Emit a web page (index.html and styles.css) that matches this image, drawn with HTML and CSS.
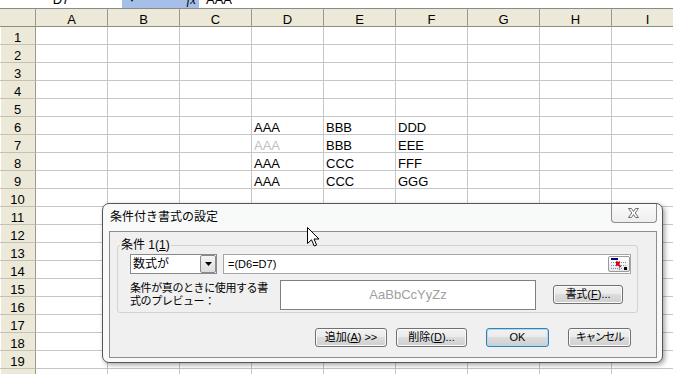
FILE: index.html
```html
<!DOCTYPE html>
<html>
<head>
    <meta charset="utf-8">
    <title>条件付き書式の設定</title>
    <link rel="stylesheet" href="styles.css">
</head>
<body>
    <div class="formula-bar">
        <div class="name-box">D7</div>
        <div class="bar-tools"><span class="name-arrow">▼</span><span class="fx">fx</span></div>
        <div class="formula">AAA</div>
    </div>

    <div class="sheet">
        <div class="corner"></div>
        <div class="col-head">A</div><div class="col-head">B</div><div class="col-head">C</div><div class="col-head">D</div><div class="col-head">E</div><div class="col-head">F</div><div class="col-head">G</div><div class="col-head">H</div><div class="col-head">I</div>

        <div class="row-head">1</div><div></div><div></div><div></div><div></div><div></div><div></div><div></div><div></div><div></div>
        <div class="row-head">2</div><div></div><div></div><div></div><div></div><div></div><div></div><div></div><div></div><div></div>
        <div class="row-head">3</div><div></div><div></div><div></div><div></div><div></div><div></div><div></div><div></div><div></div>
        <div class="row-head">4</div><div></div><div></div><div></div><div></div><div></div><div></div><div></div><div></div><div></div>
        <div class="row-head">5</div><div></div><div></div><div></div><div></div><div></div><div></div><div></div><div></div><div></div>
        <div class="row-head">6</div><div></div><div></div><div></div><div>AAA</div><div>BBB</div><div>DDD</div><div></div><div></div><div></div>
        <div class="row-head">7</div><div></div><div></div><div></div><div class="faded">AAA</div><div>BBB</div><div>EEE</div><div></div><div></div><div></div>
        <div class="row-head">8</div><div></div><div></div><div></div><div>AAA</div><div>CCC</div><div>FFF</div><div></div><div></div><div></div>
        <div class="row-head">9</div><div></div><div></div><div></div><div>AAA</div><div>CCC</div><div>GGG</div><div></div><div></div><div></div>
        <div class="row-head">10</div><div></div><div></div><div></div><div></div><div></div><div></div><div></div><div></div><div></div>
        <div class="row-head">11</div><div></div><div></div><div></div><div></div><div></div><div></div><div></div><div></div><div></div>
        <div class="row-head">12</div><div></div><div></div><div></div><div></div><div></div><div></div><div></div><div></div><div></div>
        <div class="row-head">13</div><div></div><div></div><div></div><div></div><div></div><div></div><div></div><div></div><div></div>
        <div class="row-head">14</div><div></div><div></div><div></div><div></div><div></div><div></div><div></div><div></div><div></div>
        <div class="row-head">15</div><div></div><div></div><div></div><div></div><div></div><div></div><div></div><div></div><div></div>
        <div class="row-head">16</div><div></div><div></div><div></div><div></div><div></div><div></div><div></div><div></div><div></div>
        <div class="row-head">17</div><div></div><div></div><div></div><div></div><div></div><div></div><div></div><div></div><div></div>
        <div class="row-head">18</div><div></div><div></div><div></div><div></div><div></div><div></div><div></div><div></div><div></div>
        <div class="row-head">19</div><div></div><div></div><div></div><div></div><div></div><div></div><div></div><div></div><div></div>
        <div class="row-head">20</div><div></div><div></div><div></div><div></div><div></div><div></div><div></div><div></div><div></div>
    </div>

    <div class="dialog">
        <div class="titlebar">
            <div class="title">条件付き書式の設定</div>
            <button class="close">
                <svg width="12" height="11" viewBox="0 0 12 11"><polygon points="0.5,0.5 3.5,0.5 5.5,3.5 7.5,0.5 10.5,0.5 7.2,5 10.5,9.5 7.5,9.5 5.5,6.5 3.5,9.5 0.5,9.5 3.8,5" fill="#fff" stroke="#6e6e6e"/></svg>
            </button>
        </div>
        <div class="client">
            <fieldset class="condition">
                <legend>条件 1(<u>1</u>)</legend>
                <div class="cond-row">
                    <div class="combo">
                        <span class="combo-text">数式が</span>
                        <span class="combo-btn"><svg width="7" height="4" viewBox="0 0 7 4"><polygon points="0,0 7,0 3.5,4" fill="#000"/></svg></span>
                    </div>
                    <div class="formula-input">
                        <span>=(D6=D7)</span>
                        <span class="collapse">
                            <svg width="20" height="14" viewBox="0 0 20 14">
                                <rect x="2" y="1" width="7" height="2" fill="#00007f"/>
                                <line x1="2" y1="5.5" x2="18" y2="5.5" stroke="#7f8fbf" stroke-dasharray="1 1"/>
                                <line x1="2" y1="8.5" x2="18" y2="8.5" stroke="#7f8fbf" stroke-dasharray="1 1"/>
                                <line x1="2" y1="11.5" x2="14" y2="11.5" stroke="#7f8fbf" stroke-dasharray="1 1"/>
                                <line x1="10.5" y1="4" x2="10.5" y2="13" stroke="#7f8fbf" stroke-dasharray="1 1"/>
                                <path d="M7 4 L7 9.5 L8.6 8 L11 10.6 L12.3 9.3 L9.9 6.8 L11.5 5.3 Z" fill="#e00000"/>
                                <rect x="15" y="10" width="3" height="3" fill="#000"/>
                            </svg>
                        </span>
                    </div>
                </div>
                <div class="preview-row">
                    <div class="preview-label">条件が真のときに使用する書<br>式のプレビュー：</div>
                    <div class="preview">AaBbCcYyZz</div>
                    <button class="btn format-btn">書式(<u>F</u>)...</button>
                </div>
            </fieldset>
            <div class="actions">
                <button class="btn add-btn">追加(<u>A</u>) &gt;&gt;</button>
                <button class="btn delete-btn">削除(<u>D</u>)...</button>
                <button class="btn ok-btn">OK</button>
                <button class="btn cancel-btn">キャンセル</button>
            </div>
        </div>
    </div>

    <svg class="cursor" width="13" height="21" viewBox="0 0 13 21">
        <path d="M0.5 0.5 V16.5 L4.5 12.8 L7.2 19 L9.6 18 L7 12 H12 Z" fill="#fff" stroke="#000"/>
    </svg>
</body>
</html>
```

FILE: styles.css
```css
body {
    margin: 0;
    width: 673px;
    height: 374px;
    overflow: hidden;
    position: relative;
    background-color: #fff;
    font-family: "Liberation Sans", Arial, sans-serif;
}

/* formula bar, only its lower edge shows */
.formula-bar {
    display: flex;
    height: 8px;
    overflow: hidden;
    font-size: 13px;
    line-height: 18px;
}

.formula-bar > div {
    height: 18px;
    margin-top: -9px;
}

.name-box {
    width: 122px;
    text-align: center;
}

.bar-tools {
    width: 77px;
    box-sizing: border-box;
    padding: 0 3px 0 6px;
    display: flex;
    justify-content: space-between;
    background-color: #a6bfe9;
}

.name-arrow {
    font-size: 8px;
}

.fx {
    font-family: "Liberation Serif", serif;
    font-style: italic;
}

.formula {
    flex: 1;
    padding-left: 7px;
}

/* sheet grid */
.sheet {
    display: grid;
    grid-template-columns: 36px repeat(9, 72px);
    grid-auto-rows: 18px;
    border-top: 1px solid #8a8a8a;
    font-size: 13px;
    line-height: 15px;
}

.sheet > div {
    box-sizing: border-box;
    padding: 3px 0 0 2px;
    border-right: 1px solid #c6c6c6;
    border-bottom: 1px solid #c6c6c6;
    white-space: nowrap;
    color: #000;
}

.sheet > .faded {
    color: #c0c0c0;
}

.sheet > .corner,
.sheet > .col-head,
.sheet > .row-head {
    background-color: #ece9d8;
    padding-left: 0;
    text-align: center;
}

.sheet > .corner,
.sheet > .col-head {
    border-right-color: #9d9a8c;
    border-bottom-color: #8f8c80;
}

.sheet > .row-head {
    border-right-color: #9d9a8c;
    border-bottom-color: #c4c1b2;
    box-shadow: inset 1px 0 #fff;
}

/* dialog window */
.dialog {
    position: absolute;
    left: 102px;
    top: 203px;
    width: 561px;
    height: 160px;
    box-sizing: border-box;
    border: 1px solid #555;
    border-radius: 7px;
    background-color: #f8fafa;
    box-shadow: 2px 2px 5px rgba(0, 0, 0, 0.35);
    font-family: "Liberation Sans", "Noto Sans CJK JP", sans-serif;
}

.titlebar {
    display: flex;
    align-items: flex-start;
    height: 27px;
}

.title {
    padding-left: 7px;
    font-size: 12px;
    line-height: 27px;
    color: #000;
}

.close {
    margin-left: auto;
    margin-right: 5px;
    width: 46px;
    height: 19px;
    padding: 0;
    box-sizing: border-box;
    border: 1px solid #8c8c8c;
    border-top: none;
    border-radius: 0 0 4px 4px;
    background: linear-gradient(#fbfbfb, #eeeeee);
    display: flex;
    align-items: center;
    justify-content: center;
}

.client {
    margin-left: 6px;
    width: 548px;
    height: 127px;
    box-sizing: border-box;
    border: 1px solid #8d8d8d;
    background-color: #f0f0f0;
}

.condition {
    margin: 6px 18px 0 7px;
    padding: 2px 6px 2px 12px;
    border: 1px solid #d3d3d3;
    border-radius: 3px;
    min-width: 0;
}

.condition legend {
    margin-left: -10px;
    padding: 0 1px;
    font-size: 12px;
    line-height: 14px;
}

.cond-row {
    display: flex;
    gap: 6px;
    height: 20px;
}

.combo {
    width: 87px;
    box-sizing: border-box;
    border: 1px solid #8a8a8a;
    background-color: #fff;
    display: flex;
    justify-content: space-between;
    font-size: 12px;
    line-height: 18px;
}

.combo-text {
    padding-left: 2px;
}

.combo-btn {
    width: 16px;
    box-sizing: border-box;
    border: 1px solid #8a8a8a;
    border-radius: 2px;
    background: linear-gradient(#f4f4f4, #dcdcdc);
    display: flex;
    align-items: center;
    justify-content: center;
}

.formula-input {
    flex: 1;
    box-sizing: border-box;
    border: 1px solid #a3a6ad;
    background-color: #fff;
    display: flex;
    align-items: center;
    padding-left: 4px;
    font-size: 11px;
}

.collapse {
    margin-left: auto;
    margin-right: 0;
    width: 22px;
    height: 16px;
    box-sizing: border-box;
    border: 1px solid #9a9a9a;
    border-radius: 2px;
    background: linear-gradient(#ffffff, #e6e6e6);
    display: flex;
    align-items: center;
    justify-content: center;
}

.preview-row {
    display: flex;
    align-items: flex-start;
    margin-top: 6px;
}

.preview-label {
    width: 150px;
    padding-top: 2px;
    font-size: 11px;
    line-height: 13px;
    letter-spacing: -0.4px;
    white-space: nowrap;
}

.preview {
    width: 256px;
    height: 30px;
    box-sizing: border-box;
    border: 1px solid #7f7f7f;
    background-color: #fff;
    color: #a0a0a0;
    font-size: 13px;
    line-height: 28px;
    text-align: center;
}

.btn {
    height: 19px;
    box-sizing: border-box;
    padding: 0;
    border: 1px solid #707070;
    border-radius: 3px;
    background: linear-gradient(#f2f2f2 0%, #ebebeb 45%, #dddddd 50%, #cfcfcf 100%);
    box-shadow: inset 0 0 0 1px #fbfbfb;
    font-family: "Liberation Sans", "Noto Sans CJK JP", sans-serif;
    font-size: 11px;
    line-height: 15px;
    color: #000;
}

.format-btn {
    width: 70px;
    margin: 5px 0 0 17px;
}

.actions {
    display: flex;
    justify-content: flex-end;
    margin: 15px 25px 0 0;
}

.add-btn {
    width: 72px;
}

.delete-btn {
    width: 71px;
    margin-left: 9px;
}

.ok-btn {
    width: 63px;
    margin-left: 19px;
    border-color: #3c7fb1;
    box-shadow: inset 0 0 0 1px #a8dcf4;
}

.cancel-btn {
    width: 63px;
    margin-left: 19px;
    letter-spacing: -1.5px;
}

.cursor {
    position: absolute;
    left: 307px;
    top: 227px;
}
```
